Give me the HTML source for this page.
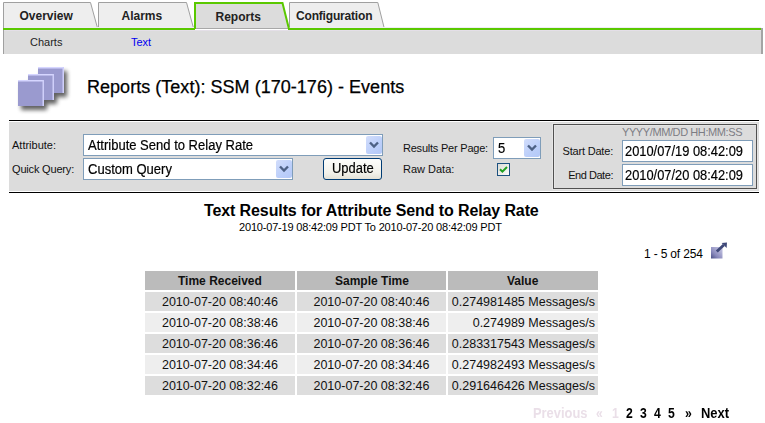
<!DOCTYPE html>
<html><head><meta charset="utf-8">
<style>
*{margin:0;padding:0;box-sizing:border-box}
html,body{width:765px;height:423px;overflow:hidden;background:#fff;font-family:"Liberation Sans",sans-serif;color:#000}
.a{position:absolute;white-space:nowrap;line-height:1}
.tabtxt{font-size:12px;font-weight:bold;color:#222}
.lbl{font-size:11px;color:#111}
.sel{position:absolute;background:#fff;border:1px solid #7f9db9}
.btn{position:absolute;width:16px;height:18px;border-radius:2px;background:linear-gradient(135deg,#d2ddfb 0%,#bccffa 60%,#b3c8f7 100%)}
.btn svg{position:absolute;left:3px;top:5px}
.inp{position:absolute;background:#fff;border:1px solid #7f9db9}
.cell{position:absolute;height:19px}
.hd{background:#bbbbbb}
.r1{background:#dddddd}
.r2{background:#eeeeee}
.tc{font-size:12.5px;color:#111}
.th{font-size:12px;font-weight:bold;color:#111}
.pg{font-size:14px;font-weight:bold;transform:scaleX(0.87);transform-origin:0 0}
</style></head><body>

<!-- Tabs -->
<svg class="a" style="left:0;top:0" width="765" height="56" viewBox="0 0 765 56">
  <!-- subnav -->
  <rect x="3" y="30" width="760" height="24" fill="#dcdcdc"/>
  <rect x="3" y="30" width="1" height="24" fill="#a0a0a0"/>
  <rect x="761" y="28" width="2" height="26" fill="#a4a4a4"/>
  <!-- Overview tab -->
  <path d="M3.5 28 L3.5 2.5 L90.5 2.5 L97.5 28" fill="#eeeeee" stroke="#a0a0a0" stroke-width="1"/>
  <!-- Alarms -->
  <path d="M98.5 28 L98.5 2.5 L186.5 2.5 L193.5 28" fill="#eeeeee" stroke="#a0a0a0" stroke-width="1"/>
  <!-- Configuration -->
  <path d="M289.5 28 L289.5 2.5 L377.8 2.5 L384.2 28" fill="#eeeeee" stroke="#a0a0a0" stroke-width="1"/>
  <!-- green base line -->
  <rect x="4" y="27" width="757" height="1" fill="#f0ecf4"/>
  <rect x="3" y="28" width="192" height="2" fill="#5ac800"/>
  <rect x="288" y="28" width="473" height="2" fill="#5ac800"/>
  <rect x="4" y="30" width="757" height="1" fill="#e4dfe8"/>
  <rect x="3" y="30" width="1" height="24" fill="#a0a0a0"/>
  <!-- Reports tab -->
  <path d="M195 29 L195 3 L282 3 L289 29 Z" fill="#dcdcdc"/>
  <rect x="196" y="28" width="92" height="1" fill="#a8a8a8"/>
  <rect x="196" y="29" width="92" height="1" fill="#ffffff"/>
  <path d="M195 29 L195 3 L282.5 3 L289 29" fill="none" stroke="#5ac800" stroke-width="2"/>
</svg>
<div class="a tabtxt" style="left:19.5px;top:10px">Overview</div>
<div class="a tabtxt" style="left:121.5px;top:10px">Alarms</div>
<div class="a tabtxt" style="left:215.5px;top:11px">Reports</div>
<div class="a tabtxt" style="left:296px;top:10px;letter-spacing:-0.18px">Configuration</div>
<div class="a" style="left:30px;top:36.5px;font-size:11px;color:#1e1e1e">Charts</div>
<div class="a" style="left:131px;top:36.5px;font-size:11px;color:#0000f0">Text</div>

<!-- Icon -->
<svg class="a" style="left:10px;top:60px" width="70" height="55" viewBox="10 60 70 55">
  <defs><filter id="sh" x="-20%" y="-20%" width="150%" height="150%"><feGaussianBlur in="SourceAlpha" stdDeviation="2"/><feOffset dx="3" dy="3.5" result="b"/><feComponentTransfer in="b" result="c"><feFuncA type="linear" slope="0.62"/></feComponentTransfer><feMerge><feMergeNode in="c"/><feMergeNode in="SourceGraphic"/></feMerge></filter></defs>
  <g filter="url(#sh)">
  <rect x="38" y="67" width="26" height="26" fill="#9a9acf"/>
  <rect x="38" y="67" width="26" height="1.5" fill="#d6d6ff"/>
  <rect x="62.5" y="67" width="1.5" height="26" fill="#cfcffa"/>
  <rect x="28" y="74" width="26" height="26" fill="#9a9acf"/>
  <rect x="28" y="74" width="26" height="1.5" fill="#d6d6ff"/>
  <rect x="52.5" y="74" width="1.5" height="26" fill="#cfcffa"/>
  <rect x="18" y="80" width="26" height="26" fill="#9a9acf"/>
  <rect x="18" y="80" width="26" height="1.5" fill="#d6d6ff"/>
  <rect x="42.5" y="80" width="1.5" height="26" fill="#cfcffa"/>
  </g>
</svg>
<div class="a" style="left:87px;top:78px;font-size:18px;color:#000;letter-spacing:0.03px;-webkit-text-stroke:0.25px #000">Reports (Text): SSM (170-176) - Events</div>

<!-- Form panel -->
<div class="a" style="left:9px;top:120px;width:750px;height:1px;background:#000"></div>
<div class="a" style="left:9px;top:122px;width:750px;height:69px;background:#dcdcdc"></div>
<div class="a" style="left:9px;top:192px;width:750px;height:1px;background:#000"></div>

<div class="a lbl" style="left:12px;top:139.6px">Attribute:</div>
<div class="a lbl" style="left:12px;top:163.5px;letter-spacing:-0.18px">Quick Query:</div>

<div class="sel" style="left:83px;top:134px;width:300px;height:22px"></div>
<div class="a" style="left:88px;top:138px;font-size:14px;transform:scaleX(0.93);transform-origin:0 0;-webkit-text-stroke:0.2px #000">Attribute Send to Relay Rate</div>
<div class="btn" style="left:366px;top:136px"><svg width="10" height="8" viewBox="0 0 10 8"><path d="M1 1.5 L5 5.5 L9 1.5" fill="none" stroke="#4d6185" stroke-width="2.4"/></svg></div>

<div class="sel" style="left:83px;top:158px;width:210px;height:22px"></div>
<div class="a" style="left:88px;top:162px;font-size:14px;transform:scaleX(0.93);transform-origin:0 0;-webkit-text-stroke:0.2px #000">Custom Query</div>
<div class="btn" style="left:276px;top:160px"><svg width="10" height="8" viewBox="0 0 10 8"><path d="M1 1.5 L5 5.5 L9 1.5" fill="none" stroke="#4d6185" stroke-width="2.4"/></svg></div>

<div class="a" style="left:323px;top:158px;width:59px;height:22px;border:1px solid #003c74;border-radius:3px;background:linear-gradient(#fdfdfb,#f2f1ea 70%,#e3e1d6)"></div>
<div class="a" style="left:332px;top:160.5px;font-size:14px;transform:scaleX(0.925);transform-origin:0 0;-webkit-text-stroke:0.2px #000">Update</div>

<div class="a lbl" style="left:403px;top:143.3px;letter-spacing:-0.22px">Results Per Page:</div>
<div class="a lbl" style="left:403px;top:164.2px">Raw Data:</div>
<div class="sel" style="left:493px;top:137px;width:48px;height:22px"></div>
<div class="a" style="left:497.5px;top:141px;font-size:14px;transform:scaleX(0.93);transform-origin:0 0;-webkit-text-stroke:0.2px #000">5</div>
<div class="btn" style="left:524px;top:139px"><svg width="10" height="8" viewBox="0 0 10 8"><path d="M1 1.5 L5 5.5 L9 1.5" fill="none" stroke="#4d6185" stroke-width="2.4"/></svg></div>
<div class="a" style="left:497px;top:163px;width:13px;height:13px;border:1px solid #1c5180;background:linear-gradient(135deg,#dcdcd7,#fbfbf9)"></div>
<svg class="a" style="left:497px;top:163px" width="13" height="13" viewBox="0 0 13 13"><path d="M3 6.2 L5.4 8.6 L10 4" fill="none" stroke="#21a121" stroke-width="2"/></svg>

<!-- date box -->
<div class="a" style="left:552px;top:123px;width:206px;height:67px;border:1px solid #e6e6e6;border-right-color:#e4e4e4;border-bottom-color:#e4e4e4"></div>
<div class="a" style="left:553px;top:124px;width:204px;height:65px;border:1px solid #505050"></div>
<div class="a" style="left:554px;top:125px;width:202px;height:63px;border:1px solid #e6e6e6;border-right:0;border-bottom:0"></div>
<div class="a" style="left:622px;top:126.7px;font-size:11px;color:#7c7c84;letter-spacing:-0.4px">YYYY/MM/DD HH:MM:SS</div>
<div class="a lbl" style="left:513px;width:100px;text-align:right;top:145.7px;letter-spacing:-0.2px">Start Date:</div>
<div class="a lbl" style="left:513px;width:100px;text-align:right;top:169.7px;letter-spacing:-0.45px">End Date:</div>
<div class="inp" style="left:622px;top:140px;width:131px;height:22px"></div>
<div class="a" style="left:625px;top:144.0px;font-size:14px;transform:scaleX(0.918);transform-origin:0 0;-webkit-text-stroke:0.2px #000">2010/07/19 08:42:09</div>
<div class="inp" style="left:622px;top:164px;width:131px;height:22px"></div>
<div class="a" style="left:625px;top:168.0px;font-size:14px;transform:scaleX(0.918);transform-origin:0 0;-webkit-text-stroke:0.2px #000">2010/07/20 08:42:09</div>

<!-- results -->
<div class="a" style="left:204px;top:202.5px;font-size:16px;font-weight:bold;letter-spacing:-0.11px">Text Results for Attribute Send to Relay Rate</div>
<div class="a" style="left:239px;top:222.3px;font-size:11px;letter-spacing:-0.18px">2010-07-19 08:42:09 PDT To 2010-07-20 08:42:09 PDT</div>
<div class="a" style="left:644px;top:247.8px;font-size:12px;letter-spacing:-0.17px">1 - 5 of 254</div>
<svg class="a" style="left:706px;top:238px" width="28" height="26" viewBox="706 238 28 26">
  <defs><linearGradient id="eg" x1="0" y1="1" x2="1" y2="0"><stop offset="0" stop-color="#4a4f86"/><stop offset=".35" stop-color="#8a8abc"/><stop offset=".75" stop-color="#b4b4d8"/><stop offset="1" stop-color="#c4c4e2"/></linearGradient></defs>
  <rect x="711" y="247" width="11.5" height="11.5" fill="url(#eg)"/>
  <path d="M716.8 251.6 L723.8 245" stroke="#3e4878" stroke-width="2.8"/>
  <path d="M721.6 243 L727 242.6 L726.6 248 Z" fill="#3e4878"/>
</svg>

<!-- table -->
<div class="cell hd" style="left:145px;top:271px;width:150px"></div>
<div class="cell hd" style="left:297px;top:271px;width:149px"></div>
<div class="cell hd" style="left:448px;top:271px;width:150px"></div>
<div class="a th" style="left:178px;top:274.5px">Time Received</div>
<div class="a th" style="left:335px;top:274.5px">Sample Time</div>
<div class="a th" style="left:507px;top:274.5px">Value</div>

<div class="cell r1" style="left:145px;top:292px;width:150px"></div>
<div class="cell r1" style="left:297px;top:292px;width:149px"></div>
<div class="cell r1" style="left:448px;top:292px;width:150px"></div>
<div class="a tc" style="left:145px;top:296px;width:150px;text-align:center">2010-07-20 08:40:46</div>
<div class="a tc" style="left:297px;top:296px;width:149px;text-align:center">2010-07-20 08:40:46</div>
<div class="a tc" style="left:448px;top:296px;width:147px;text-align:right">0.274981485 Messages/s</div>
<div class="cell r2" style="left:145px;top:313px;width:150px"></div>
<div class="cell r2" style="left:297px;top:313px;width:149px"></div>
<div class="cell r2" style="left:448px;top:313px;width:150px"></div>
<div class="a tc" style="left:145px;top:317px;width:150px;text-align:center">2010-07-20 08:38:46</div>
<div class="a tc" style="left:297px;top:317px;width:149px;text-align:center">2010-07-20 08:38:46</div>
<div class="a tc" style="left:448px;top:317px;width:147px;text-align:right">0.274989 Messages/s</div>
<div class="cell r1" style="left:145px;top:334px;width:150px"></div>
<div class="cell r1" style="left:297px;top:334px;width:149px"></div>
<div class="cell r1" style="left:448px;top:334px;width:150px"></div>
<div class="a tc" style="left:145px;top:338px;width:150px;text-align:center">2010-07-20 08:36:46</div>
<div class="a tc" style="left:297px;top:338px;width:149px;text-align:center">2010-07-20 08:36:46</div>
<div class="a tc" style="left:448px;top:338px;width:147px;text-align:right">0.283317543 Messages/s</div>
<div class="cell r2" style="left:145px;top:355px;width:150px"></div>
<div class="cell r2" style="left:297px;top:355px;width:149px"></div>
<div class="cell r2" style="left:448px;top:355px;width:150px"></div>
<div class="a tc" style="left:145px;top:359px;width:150px;text-align:center">2010-07-20 08:34:46</div>
<div class="a tc" style="left:297px;top:359px;width:149px;text-align:center">2010-07-20 08:34:46</div>
<div class="a tc" style="left:448px;top:359px;width:147px;text-align:right">0.274982493 Messages/s</div>
<div class="cell r1" style="left:145px;top:376px;width:150px"></div>
<div class="cell r1" style="left:297px;top:376px;width:149px"></div>
<div class="cell r1" style="left:448px;top:376px;width:150px"></div>
<div class="a tc" style="left:145px;top:380px;width:150px;text-align:center">2010-07-20 08:32:46</div>
<div class="a tc" style="left:297px;top:380px;width:149px;text-align:center">2010-07-20 08:32:46</div>
<div class="a tc" style="left:448px;top:380px;width:147px;text-align:right">0.291646426 Messages/s</div>

<!-- pagination -->
<div class="a pg" style="left:532.5px;top:406px;color:#eadfe8;transform:scaleX(0.92)">Previous</div>
<div class="a pg" style="left:596px;top:406px;color:#eadfe8">&laquo;</div>
<div class="a pg" style="left:612px;top:406px;color:#eadfe8">1</div>
<div class="a pg" style="left:626px;top:406px">2</div>
<div class="a pg" style="left:640px;top:406px">3</div>
<div class="a pg" style="left:654px;top:406px">4</div>
<div class="a pg" style="left:668px;top:406px">5</div>
<div class="a pg" style="left:685px;top:406px">&raquo;</div>
<div class="a pg" style="left:700.5px;top:406px;transform:scaleX(0.925)">Next</div>
</body></html>
